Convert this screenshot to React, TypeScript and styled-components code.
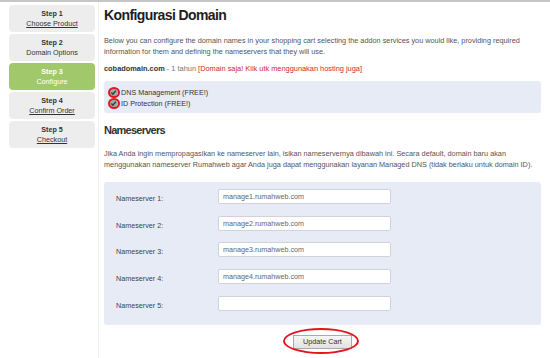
import React from "react";
import styled, { createGlobalStyle } from "styled-components";

const Global = createGlobalStyle`
  html, body { margin: 0; padding: 0; background: #fff; }
  body {
    width: 550px;
    height: 358px;
    overflow: hidden;
    font-family: "Liberation Sans", Arial, sans-serif;
  }
`;

const Page = styled.div`
  display: flex;
  height: 358px;
  box-sizing: border-box;
  border-top: 2px solid #c6c6c6;
`;

const Sidebar = styled.nav`
  width: 86px;
  padding: 3px 3px 0 9px;
  border-right: 1px solid #efefef;
  display: flex;
  flex-direction: column;
  gap: 2px;
`;

const StepBox = styled.div<{ $active?: boolean }>`
  height: 27px;
  border-radius: 4px;
  background: ${(p) => (p.$active ? "#a1c96b" : "#ededed")};
  color: ${(p) => (p.$active ? "#fff" : "#333")};
  display: flex;
  flex-direction: column;
  align-items: center;
  justify-content: center;
  font-size: 7.2px;
  line-height: 10px;
`;

const StepTitle = styled.span`
  font-weight: bold;
`;

const StepLink = styled.span<{ $link?: boolean }>`
  text-decoration: ${(p) => (p.$link ? "underline" : "none")};
`;

const Main = styled.main`
  flex: 1;
  padding: 0 9px 0 5px;
  display: flex;
  flex-direction: column;
`;

const Title = styled.h1`
  margin: 5px 0 0;
  font-size: 14px;
  line-height: 16px;
  font-weight: bold;
  letter-spacing: -0.6px;
  color: #1e1e1e;
`;

const Para = styled.p<{ $mt: number }>`
  margin: ${(p) => p.$mt}px 0 0;
  font-size: 7.3px;
  line-height: 11px;
  color: #555;
`;

const DomainLine = styled.p`
  margin: 6px 0 0;
  font-size: 7.4px;
  line-height: 11px;
  color: #777;
`;

const DomainName = styled.strong`
  color: #333;
`;

const RedText = styled.span`
  color: #cc2a2a;
`;

const Panel = styled.div<{ $pad: string }>`
  background: #e6ebf6;
  border-radius: 3px;
  padding: ${(p) => p.$pad};
`;

const AddonPanel = styled(Panel)`
  margin-top: 7px;
  display: flex;
  flex-direction: column;
`;

const Addon = styled.label`
  display: flex;
  align-items: center;
  height: 11px;
  font-size: 7.2px;
  color: #333;
  gap: 3px;
`;

const CheckWrap = styled.span`
  position: relative;
  width: 9px;
  height: 9px;
  margin-left: 5px;
  display: inline-flex;
`;

const RedRing = styled.span<{ $w: number; $h: number; $l: number; $t: number }>`
  position: absolute;
  left: ${(p) => p.$l}px;
  top: ${(p) => p.$t}px;
  width: ${(p) => p.$w}px;
  height: ${(p) => p.$h}px;
  box-sizing: border-box;
  border: 2px solid #e3151f;
  border-radius: 50%;
  pointer-events: none;
`;

const SubTitle = styled.h2`
  margin: 11px 0 0;
  font-size: 11px;
  line-height: 13px;
  font-weight: bold;
  letter-spacing: -0.75px;
  color: #333;
`;

const NsPanel = styled(Panel)`
  margin-top: 12px;
  display: grid;
  grid-template-columns: 102px 173px;
  row-gap: 11.7px;
  align-items: center;
`;

const NsLabel = styled.span`
  font-size: 7.2px;
  color: #444;
  padding-top: 4px;
`;

const NsInput = styled.input`
  box-sizing: border-box;
  width: 173px;
  height: 15px;
  border: 1px solid #cfd3da;
  border-radius: 2px;
  background: #fff;
  font-family: "Liberation Sans", Arial, sans-serif;
  font-size: 7.2px;
  color: #666;
  padding: 0 4px;
  outline: none;
`;

const ButtonRow = styled.div`
  display: flex;
  justify-content: center;
  margin-top: 10px;
`;

const ButtonWrap = styled.span`
  position: relative;
  display: inline-flex;
`;

const Button = styled.button`
  width: 59px;
  height: 14px;
  padding: 0;
  border: 1px solid #aaa;
  border-radius: 0;
  background: linear-gradient(#f6f6f6, #e2e2e2);
  font-family: "Liberation Sans", Arial, sans-serif;
  font-size: 7.2px;
  color: #333;
`;

const Check = () => (
  <svg width="9" height="9" viewBox="0 0 9 9">
    <circle cx="4.5" cy="4.5" r="4.3" fill="#a8a8a8" />
    <path d="M2.3 4.6 L3.9 6.2 L6.8 2.8" fill="none" stroke="#3c3c3c" strokeWidth="1.4" />
  </svg>
);

const steps = [
  { n: 1, label: "Choose Product", link: true },
  { n: 2, label: "Domain Options", link: false },
  { n: 3, label: "Configure", link: false, active: true },
  { n: 4, label: "Confirm Order", link: true },
  { n: 5, label: "Checkout", link: true },
];

const ns = [
  "manage1.rumahweb.com",
  "manage2.rumahweb.com",
  "manage3.rumahweb.com",
  "manage4.rumahweb.com",
  "",
];

export default function App() {
  return (
    <>
      <Global />
      <Page>
        <Sidebar>
          {steps.map((s) => (
            <StepBox key={s.n} $active={s.active}>
              <StepTitle>Step {s.n}</StepTitle>
              <StepLink $link={s.link}>{s.label}</StepLink>
            </StepBox>
          ))}
        </Sidebar>
        <Main>
          <Title>Konfigurasi Domain</Title>
          <Para $mt={12}>
            Below you can configure the domain names in your shopping cart selecting the addon services you would like, providing required information for them and defining the nameservers that they will use.
          </Para>
          <DomainLine>
            <DomainName>cobadomain.com</DomainName> - 1 tahun{" "}
            <RedText>[Domain saja! Klik utk menggunakan hosting juga]</RedText>
          </DomainLine>
          <AddonPanel $pad="6px 0 4px">
            {["DNS Management (FREE!)", "ID Protection (FREE!)"].map((t) => (
              <Addon key={t}>
                <CheckWrap>
                  <Check />
                  <RedRing $w={12} $h={11} $l={-1.5} $t={-1} />
                </CheckWrap>
                {t}
              </Addon>
            ))}
          </AddonPanel>
          <SubTitle>Nameservers</SubTitle>
          <Para $mt={11}>
            Jika Anda ingin mempropagasikan ke nameserver lain, isikan nameservernya dibawah ini. Secara default, domain baru akan menggunakan nameserver Rumahweb agar Anda juga dapat menggunakan layanan Managed DNS (tidak berlaku untuk domain ID).
          </Para>
          <NsPanel $pad="7px 0 14px 12px">
            {ns.map((v, i) => (
              <React.Fragment key={i}>
                <NsLabel>Nameserver {i + 1}:</NsLabel>
                <NsInput defaultValue={v} />
              </React.Fragment>
            ))}
          </NsPanel>
          <ButtonRow>
            <ButtonWrap>
              <Button>Update Cart</Button>
              <RedRing $w={76} $h={26} $l={-10} $t={-7} />
            </ButtonWrap>
          </ButtonRow>
        </Main>
      </Page>
    </>
  );
}
